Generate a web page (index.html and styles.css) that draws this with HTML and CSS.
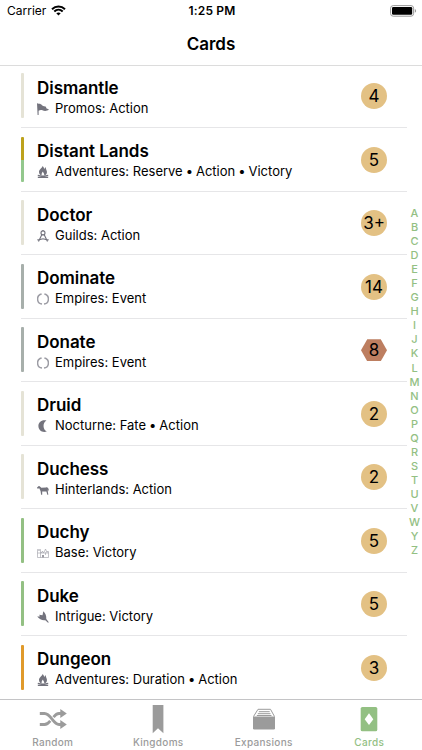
FILE: index.html
```html
<!DOCTYPE html>
<html lang="en">
<head>
    <meta charset="UTF-8">
    <meta name="viewport" content="width=device-width, initial-scale=1.0">
    <title>Cards</title>
    <link rel="stylesheet" href="styles.css">
</head>
<body>
    <svg class="symbols" width="0" height="0">
        <symbol id="promos" viewBox="0 0 12 12">
            <path d="M0 0.500L1 0.300L1.300 0.800C3 0.500 4 1 5 2.200C6.500 3.500 8 3 9 3.800L9.300 5.200L12 6.500C9.500 8.500 7 7.900 5.500 7.300C4 6.800 2.800 7 1.600 7.800L1.600 12H0.600Z"/>
        </symbol>
        <symbol id="adventures" viewBox="0 0 12 12">
            <path d="M5.500 0C5.300 2 2 3.300 2 6C2 8 3 9 4.700 9.600C4.300 7.800 5 6.600 6 5.500C6 7 7.700 7.500 7.200 9.600C9.300 9 10.200 7.500 9.900 5.500C9.700 4 8.700 3.500 8.900 1.300C7.600 2 7.500 2.700 7.300 3.300C7 2 6.700 1 5.500 0Z"/>
            <path d="M0.800 9.300L11.200 11.400M11.200 9.300L0.800 11.400" stroke="currentColor" stroke-width="1.200"/>
        </symbol>
        <symbol id="guilds" viewBox="0 0 12 12">
            <g fill="none" stroke="currentColor" stroke-width="1.100">
                <circle cx="6" cy="2.900" r="2"/>
                <path d="M6 0V1.200M4.900 4.500L1.500 11.600M7.100 4.500L10.500 11.600M0.300 9.700C3 10.300 4.500 9.200 6 8.700C7.500 9.200 9 10.300 11.700 9.700"/>
            </g>
        </symbol>
        <symbol id="empires" viewBox="0 0 12 12">
            <path d="M4.600 0.900A5.200 5.200 0 0 0 5 11.100M7.400 0.900A5.200 5.200 0 0 1 7 11.100" fill="none" stroke="currentColor" stroke-width="1.500"/>
        </symbol>
        <symbol id="nocturne" viewBox="0 0 12 12">
            <path d="M9.500 0.500C5.500 3 5.500 9 9.800 11.500C5 13 1.400 10 1.400 6C1.400 2 5 -0.800 9.500 0.500Z"/>
        </symbol>
        <symbol id="hinterlands" viewBox="0 0 12 12">
            <path d="M0 3.600L1.800 2L2.700 2.200L4.300 3.800L9 3.400C10.800 3.100 11.900 4.500 11.900 7.500L10.900 5.400L10.800 7.200L11.300 10.700H10.300L9.400 7.600L5.200 7.400L5.200 10.700H4.100L3.600 7.200L2.600 5L2.300 4.200L0.600 4.700Z"/>
        </symbol>
        <symbol id="base" viewBox="0 0 12 12">
            <path d="M0.500 10.500V2.500H1.500V3.500H2.500V2.500H3.500V5.500H5V4.500H6V5.500H7L8.500 2L10 5.500V4.500H11.500V10.500ZM0.500 6H11.500M3.500 5.500V10.500M8.500 5.500V8" fill="none" stroke="currentColor" stroke-width="0.600"/>
            <path d="M5 10.500V8H7V10.500Z"/>
        </symbol>
        <symbol id="intrigue" viewBox="0 0 12 12">
            <path d="M6.300 0.300C8.300 2 9.500 4.500 9.300 8L11.800 11.200L11 11.800L8.300 9.200C5.500 9.700 2.300 8.500 0.200 5.600L2.800 5.600L2.300 3.800L5.500 4.300Z"/>
        </symbol>
    </svg>

    <div class="status-bar">
        <div class="carrier">
            <span>Carrier</span>
            <svg class="wifi" viewBox="0 0 15 11">
                <path d="M1 4.200C4.700 0.600 10.300 0.600 14 4.200M3.300 6.500C5.700 4.200 9.300 4.200 11.700 6.500" fill="none" stroke="#000" stroke-width="2"/>
                <path d="M5.300 8.300C6.600 7.200 8.400 7.200 9.700 8.300L7.500 10.500Z"/>
            </svg>
        </div>
        <div class="time">1:25 PM</div>
        <svg class="battery" viewBox="0 0 27 12">
            <rect x="0.600" y="0.600" width="23" height="10.600" rx="2.600" fill="none" stroke="#999" stroke-width="1"/>
            <rect x="2" y="2" width="20.200" height="7.800" rx="1.300"/>
            <path d="M24.800 4C26.600 4.500 26.600 7.300 24.800 7.800Z" fill="#999"/>
        </svg>
    </div>
    <h1 class="nav-title">Cards</h1>

    <div class="content">
        <ul class="card-list">
            <li class="card">
                <span class="bar action"></span>
                <div class="info">
                    <h2>Dismantle</h2>
                    <p><svg class="icon"><use href="#promos"/></svg>Promos: Action</p>
                </div>
                <span class="cost">4</span>
            </li>
            <li class="card">
                <span class="bar reserve-victory"></span>
                <div class="info">
                    <h2>Distant Lands</h2>
                    <p><svg class="icon"><use href="#adventures"/></svg>Adventures: Reserve <span class="dot">•</span> Action <span class="dot">•</span> Victory</p>
                </div>
                <span class="cost">5</span>
            </li>
            <li class="card">
                <span class="bar action"></span>
                <div class="info">
                    <h2>Doctor</h2>
                    <p><svg class="icon"><use href="#guilds"/></svg>Guilds: Action</p>
                </div>
                <span class="cost">3+</span>
            </li>
            <li class="card">
                <span class="bar event"></span>
                <div class="info">
                    <h2>Dominate</h2>
                    <p><svg class="icon light"><use href="#empires"/></svg>Empires: Event</p>
                </div>
                <span class="cost">14</span>
            </li>
            <li class="card">
                <span class="bar event"></span>
                <div class="info">
                    <h2>Donate</h2>
                    <p><svg class="icon light"><use href="#empires"/></svg>Empires: Event</p>
                </div>
                <span class="cost debt">8</span>
            </li>
            <li class="card">
                <span class="bar action"></span>
                <div class="info">
                    <h2>Druid</h2>
                    <p><svg class="icon"><use href="#nocturne"/></svg>Nocturne: Fate <span class="dot">•</span> Action</p>
                </div>
                <span class="cost">2</span>
            </li>
            <li class="card">
                <span class="bar action"></span>
                <div class="info">
                    <h2>Duchess</h2>
                    <p><svg class="icon"><use href="#hinterlands"/></svg>Hinterlands: Action</p>
                </div>
                <span class="cost">2</span>
            </li>
            <li class="card">
                <span class="bar victory"></span>
                <div class="info">
                    <h2>Duchy</h2>
                    <p><svg class="icon light"><use href="#base"/></svg>Base: Victory</p>
                </div>
                <span class="cost">5</span>
            </li>
            <li class="card">
                <span class="bar victory"></span>
                <div class="info">
                    <h2>Duke</h2>
                    <p><svg class="icon"><use href="#intrigue"/></svg>Intrigue: Victory</p>
                </div>
                <span class="cost">5</span>
            </li>
            <li class="card">
                <span class="bar duration"></span>
                <div class="info">
                    <h2>Dungeon</h2>
                    <p><svg class="icon"><use href="#adventures"/></svg>Adventures: Duration <span class="dot">•</span> Action</p>
                </div>
                <span class="cost">3</span>
            </li>
        </ul>
        <div class="index">
            <span>A</span><span>B</span><span>C</span><span>D</span><span>E</span>
            <span>F</span><span>G</span><span>H</span><span>I</span><span>J</span>
            <span>K</span><span>L</span><span>M</span><span>N</span><span>O</span>
            <span>P</span><span>Q</span><span>R</span><span>S</span><span>T</span>
            <span>U</span><span>V</span><span>W</span><span>Y</span><span>Z</span>
        </div>
    </div>

    <nav class="tabs">
        <a class="tab">
            <svg viewBox="0 0 28 30">
                <path d="M0.800 9.500H5.500C12 9.500 14 20.500 20 20.500H22M0.800 20.500H5.500C8.500 20.500 10 18.500 11.300 16.800M14.500 13.200C16 11.200 17.500 9.500 20 9.500H22" fill="none" stroke="currentColor" stroke-width="2.800"/>
                <path d="M21.300 5L27.800 9.500L21.300 14ZM21.300 16L27.800 20.500L21.300 25Z"/>
            </svg>
            <span>Random</span>
        </a>
        <a class="tab">
            <svg viewBox="0 0 28 30">
                <path d="M8.700 1H19.400V29.300L14 24.300L8.700 29.300Z"/>
            </svg>
            <span>Kingdoms</span>
        </a>
        <a class="tab">
            <svg viewBox="0 0 28 30">
                <path d="M3 12.500H25V24.200Q25 25.500 23.700 25.500H4.300Q3 25.500 3 24.200Z"/>
                <path d="M3.500 12.500L8 5.300H20.500L24.500 12.500M8.800 7.700H19.700M7.800 9.700H20.500M6.800 11.500H21.500" fill="none" stroke="currentColor" stroke-width="1"/>
            </svg>
            <span>Expansions</span>
        </a>
        <a class="tab active">
            <svg viewBox="0 0 28 30">
                <rect x="5.700" y="3" width="16.600" height="24.300" rx="1.600"/>
                <path d="M14 9.300L18.300 15.200L14 21.100L9.700 15.200Z" fill="#fff"/>
            </svg>
            <span>Cards</span>
        </a>
    </nav>
</body>
</html>
```

FILE: styles.css
```css
* {
    box-sizing: border-box;
}
body {
    font-family: Inter, "Liberation Sans", sans-serif;
    margin: 0;
    height: 750px;
    display: flex;
    flex-direction: column;
    overflow: hidden;
    background-color: #ffffff;
    color: #000000;
}
.symbols {
    display: none;
}
.status-bar {
    height: 22px;
    flex: none;
    padding: 0 5px 1px 7px;
    display: grid;
    grid-template-columns: 1fr auto 1fr;
    align-items: center;
    font-size: 12px;
}
.carrier {
    display: flex;
    align-items: center;
    gap: 5px;
}
.wifi {
    width: 15px;
    height: 11px;
}
.time {
    font-weight: 600;
    letter-spacing: 0.2px;
}
.battery {
    width: 27px;
    height: 12px;
    justify-self: end;
}
.nav-title {
    margin: 0;
    height: 44px;
    flex: none;
    border-bottom: 1px solid #dcdcdc;
    font-size: 17px;
    font-weight: 600;
    line-height: 44px;
    text-align: center;
}
.content {
    flex: 1;
    min-height: 0;
    display: flex;
    overflow: hidden;
}
.card-list {
    flex: 1;
    list-style: none;
    margin: -1.5px 0 0;
    padding: 0 0 0 21px;
}
.card {
    height: 63.5px;
    display: flex;
    align-items: center;
    padding-right: 20px;
    border-bottom: 1px solid #e6e6e8;
}
.bar {
    width: 3px;
    height: 45px;
    margin-right: 13px;
    border-radius: 1px;
}
.action {
    background-color: #e5e3d6;
}
.event {
    background-color: #a7afab;
}
.victory {
    background-color: #93c083;
}
.duration {
    background-color: #e09a2b;
}
.reserve-victory {
    background: linear-gradient(#bda21c 50%, #93c88d 50%);
}
.info {
    flex: 1;
    padding-top: 2px;
}
h2 {
    margin: 0;
    font-size: 17px;
    font-weight: 600;
    line-height: 22px;
    letter-spacing: -0.05px;
}
p {
    margin: 0;
    font-size: 13px;
    line-height: 18px;
}
.dot {
    margin: 0 -0.7px;
}
.icon {
    width: 12px;
    height: 12px;
    margin-right: 6px;
    vertical-align: -2px;
    color: #73737d;
    fill: currentColor;
}
.light {
    color: #9c9ca4;
}
.cost {
    width: 26px;
    height: 26px;
    margin-top: 1px;
    border-radius: 50%;
    background-color: #e3c184;
    font-size: 17px;
    line-height: 26px;
    text-align: center;
    white-space: nowrap;
}
.debt {
    height: 22px;
    line-height: 22px;
    border-radius: 0;
    background-color: #bd7e60;
    clip-path: polygon(24% 0, 76% 0, 100% 50%, 76% 100%, 24% 100%, 0 50%);
}
.index {
    width: 15px;
    padding-top: 140px;
    display: flex;
    flex-direction: column;
    align-items: center;
    color: #93c083;
    font-size: 11px;
    font-weight: 500;
    line-height: 14.04px;
}
.tabs {
    height: 51px;
    flex: none;
    display: flex;
    border-top: 1px solid #c4c4c6;
    background-color: #ffffff;
}
.tab {
    flex: 1;
    display: flex;
    flex-direction: column;
    align-items: center;
    padding-top: 4px;
    color: #9b9b9b;
    font-size: 10px;
    font-weight: 500;
    line-height: 12px;
    letter-spacing: 0.3px;
}
.tab svg {
    width: 28px;
    height: 30px;
    margin-bottom: 2px;
    fill: currentColor;
}
.active {
    color: #93c083;
}
```
